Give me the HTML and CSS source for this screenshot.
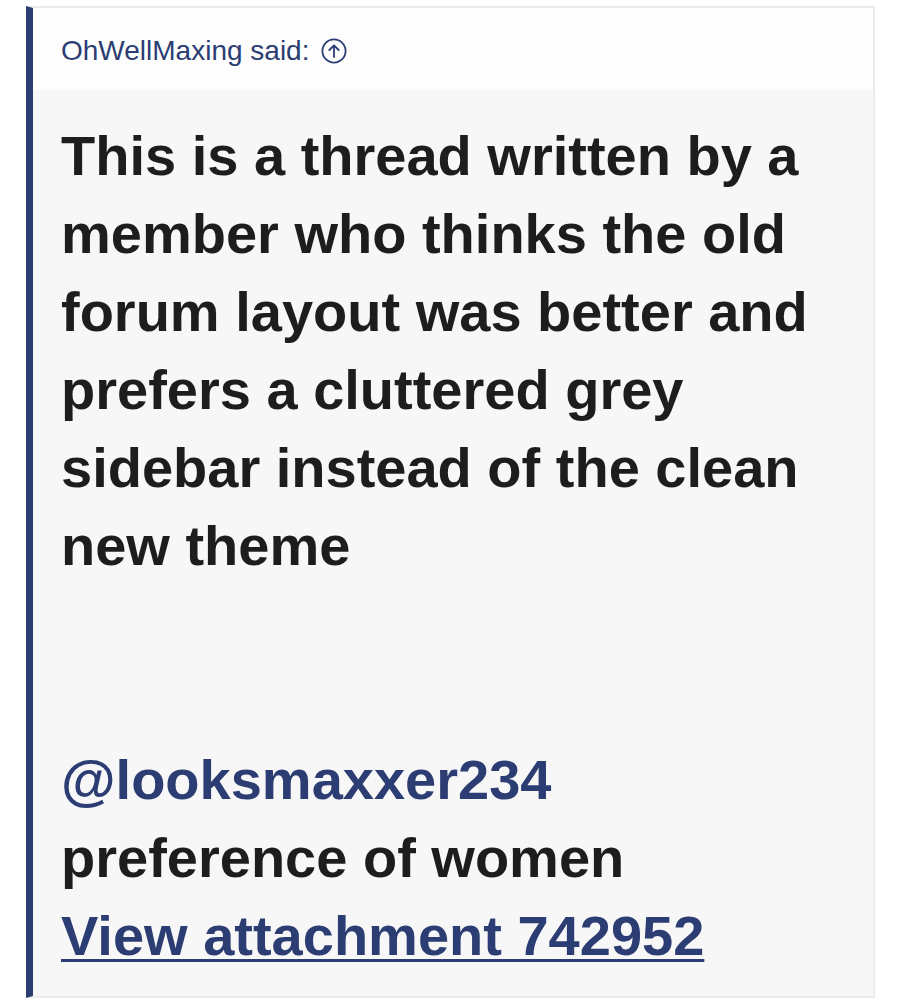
FILE: index.html
```html
<!DOCTYPE html>
<html lang="en">

<head>
    <meta charset="UTF-8">
    <meta name="viewport" content="width=device-width, initial-scale=1.0">
    <title>Quote</title>
    <link rel="stylesheet" href="styles.css">
</head>

<body>
    <blockquote class="quote">
        <div class="quote-title">
            <span>OhWellMaxing said:</span>
            <a class="quote-jump" href="#" aria-label="Go to post">
                <svg width="26" height="26" viewBox="0 0 26 26" fill="none" stroke="currentColor" stroke-width="1.8" stroke-linecap="round" stroke-linejoin="round">
                    <circle cx="13" cy="13" r="11.6"/>
                    <path d="M13 19V7.5M8.3 12L13 7.3L17.7 12"/>
                </svg>
            </a>
        </div>
        <div class="quote-content">
            <p>This is a thread written by a member who thinks the old forum layout was better and prefers a cluttered grey sidebar instead of the clean new theme</p>
            <p class="spacer"><br><br></p>
            <p><a class="mention" href="#">@looksmaxxer234</a><br>
                preference of women<br>
                <a class="attachment" href="#">View attachment 742952</a></p>
        </div>
    </blockquote>
</body>

</html>
```

FILE: styles.css
```css
body {
    margin: 0;
    padding: 6px 26px 0 26px;
    background-color: #ffffff;
    font-family: "Liberation Sans", Arial, Helvetica, sans-serif;
}

.quote {
    margin: 0;
    width: 849px;
    height: 992px;
    border: 2px solid #ebebeb;
    border-left: 7px solid #2c3d73;
    display: flex;
    flex-direction: column;
    box-sizing: border-box;
}

.quote-title {
    background-color: #fdfdfd;
    height: 82px;
    padding: 4px 0 0 28px;
    display: flex;
    align-items: center;
    gap: 12px;
    font-size: 28px;
    color: #2c3d73;
    box-sizing: border-box;
}

.quote-jump {
    color: #2c3d73;
    display: flex;
}

.quote-content {
    flex: 1;
    background-color: #f7f7f7;
    padding: 27px 28px 0 28px;
    font-size: 56px;
    font-weight: bold;
    line-height: 78px;
    color: #1d1d1d;
}

.quote-content p {
    margin: 0;
}

.mention {
    color: #2c3d73;
    text-decoration: none;
}

.attachment {
    color: #2c3d73;
    text-decoration: underline;
    text-decoration-thickness: 3px;
    text-underline-offset: 4px;
}
```
